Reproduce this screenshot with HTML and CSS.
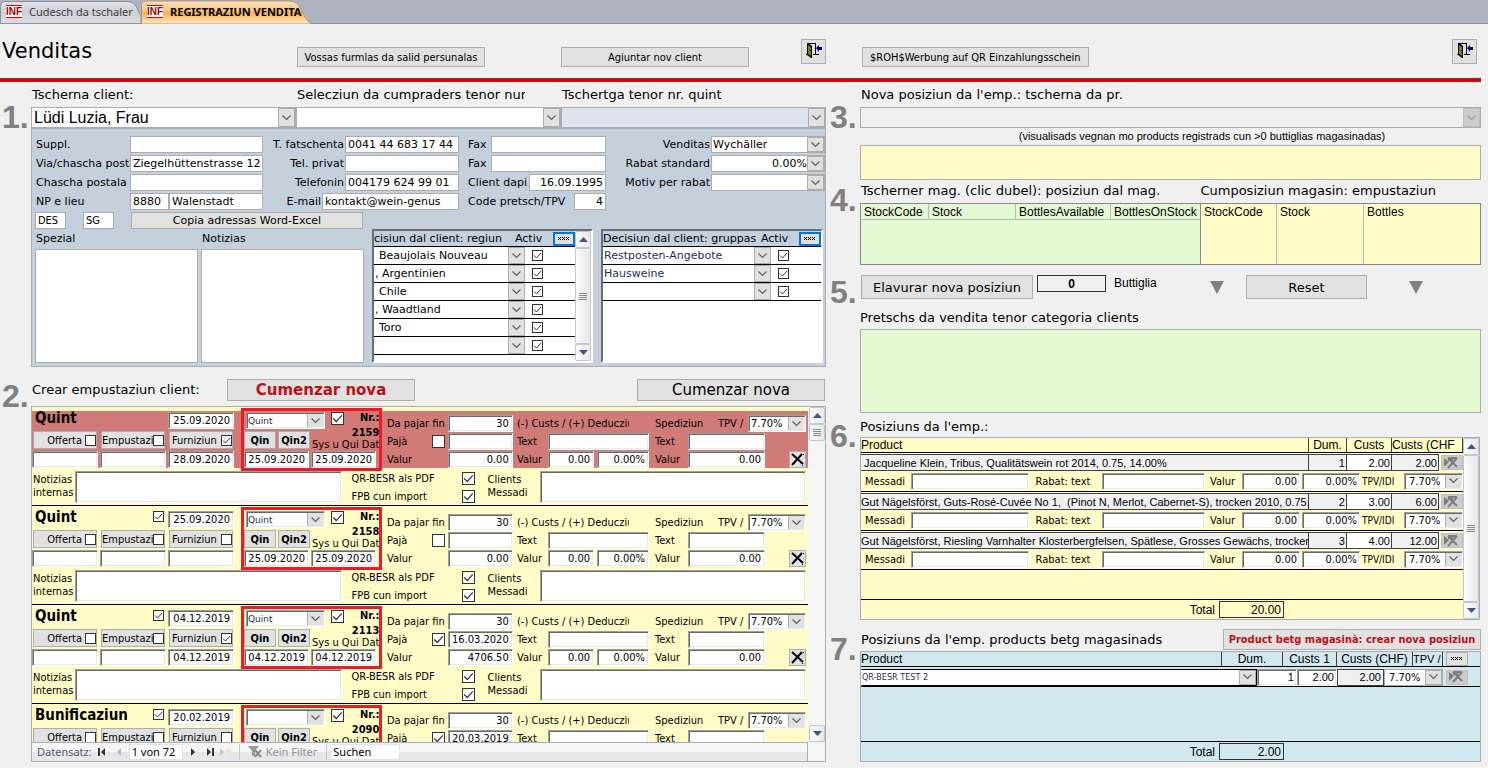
FILE: index.html
```html
<!DOCTYPE html>
<html lang="rm">
<head>
    <meta charset="UTF-8">
    <meta name="viewport" content="width=device-width, initial-scale=1.0">
    <title>Registraziun vendita</title>
    <link rel="stylesheet" href="styles.css">
</head>
<body>
    <svg class="symbols" aria-hidden="true">
        <symbol id="icon-exit" viewBox="0 0 16 16">
            <path d="M1 0h9v11h3v1H7v-1h2V1H2z" fill="#000"/>
            <path d="M0 11h2v1H0z" fill="#000"/>
            <path d="M1 0h1l4 3v12h-1l-4-3z" fill="#000"/>
            <path d="M2 2l3 2v9l-3-2z" fill="#808000"/>
            <path d="M4 7h1v1H4z" fill="#000"/>
            <path d="M10 5l3-3v2h3v3h-3v2z" fill="#000080"/>
        </symbol>
        <symbol id="icon-delete" viewBox="0 0 15 15">
            <path d="M2 2l11 10M12 2L2 13" fill="none" stroke="#000" stroke-width="2"/>
            <path d="M12 13h1v1h-1zM13 2h1v1h-1z" fill="#000"/>
        </symbol>
        <symbol id="icon-delete-off" viewBox="0 0 18 12">
            <path d="M1 1l5 4-5 5z" fill="#7d7d7d"/>
            <path d="M5 1l9 9M14 1L5 11M5 1h9M5 3h5" fill="none" stroke="#7d7d7d" stroke-width="2"/>
        </symbol>
        <symbol id="icon-up" viewBox="0 0 9 5"><path d="M0 5l4.500-5L9 5z" fill="#44547c"/></symbol>
        <symbol id="icon-down" viewBox="0 0 9 5"><path d="M0 0l4.500 5L9 0z" fill="#44547c"/></symbol>
        <symbol id="icon-dots" viewBox="0 0 12 4">
            <path d="M0 0h1v1H0zM2 0h1v1H2zM1 1h1v1H1zM0 2h1v1H0zM2 2h1v1H2zM4 0h1v1H4zM6 0h1v1H6zM5 1h1v1H5zM4 2h1v1H4zM6 2h1v1H6zM8 0h1v1H8zM10 0h1v1h-1zM9 1h1v1H9zM8 2h1v1H8zM10 2h1v1h-1z" fill="#000"/>
        </symbol>
    </svg>

    <nav class="tab-bar">
        <a class="tab" href="#">
            <svg class="tab-shape" viewBox="0 0 141 23" aria-hidden="true">
                <defs><linearGradient id="tabGrey" x2="0" y2="1"><stop offset="0" stop-color="#dfe1e6"/><stop offset=".5" stop-color="#cdd0d7"/><stop offset="1" stop-color="#dcdee4"/></linearGradient></defs>
                <path d="M.5 23V6Q.5 1 5 1H128Q136 2 138 10L141 16V23z" fill="url(#tabGrey)" stroke="#8b919d"/>
            </svg>
            <span class="tab-logo">INF</span>
            <span>Cudesch da tschaler</span>
        </a>
        <a class="tab tab-active" href="#">
            <svg class="tab-shape" viewBox="0 0 172 24" aria-hidden="true">
                <defs><linearGradient id="tabOrange" x2="0" y2="1"><stop offset="0" stop-color="#fde3bd"/><stop offset=".4" stop-color="#fcc681"/><stop offset=".5" stop-color="#fbb04c"/><stop offset="1" stop-color="#fde9cb"/></linearGradient></defs>
                <path d="M.5 24V5Q.5 1 4.500 1H148Q157 1 160 9Q166 23 171 24z" fill="url(#tabOrange)" stroke="#a8977f"/>
            </svg>
            <span class="tab-logo">INF</span>
            <span>REGISTRAZIUN VENDITA</span>
        </a>
    </nav>

    <header class="header columns">
        <div class="header-left">
            <h1>Venditas</h1>
            <button class="header-button">Vossas furmlas da salid persunalas</button>
            <button class="header-button header-add">Agiuntar nov client</button>
            <button class="exit-button" aria-label="Serrar"><svg><use href="#icon-exit"/></svg></button>
        </div>
        <div class="header-right">
            <button class="header-button">$ROH$Werbung auf QR Einzahlungsschein</button>
            <button class="exit-button" aria-label="Serrar"><svg><use href="#icon-exit"/></svg></button>
        </div>
    </header>

    <main class="columns">
        <div class="column-left">
            <section class="step">
                <div class="step-number step-number-low">1.</div>
                <div class="step-body">
                    <div class="search-row">
                        <div class="search-field">
                            <label for="client">Tscherna client:</label>
                            <select id="client"><option>Lüdi Luzia, Frau</option></select>
                        </div>
                        <div class="search-field">
                            <label for="buyers" class="label-cut">Selecziun da cumpraders tenor numer</label>
                            <select id="buyers"><option></option></select>
                        </div>
                        <div class="search-field">
                            <label for="receipt">Tschertga tenor nr. quint</label>
                            <select id="receipt" class="search-focus"><option></option></select>
                        </div>
                    </div>

                    <div class="client-panel">
                        <div class="client-fields">
                            <div class="field-group">
                                <div class="line"><label for="suppl">Suppl.</label><input id="suppl" class="w133"></div>
                                <div class="line"><label for="street">Via/chascha postala</label><input id="street" class="w133" value="Ziegelhüttenstrasse 12"></div>
                                <div class="line"><label for="pobox">Chascha postala</label><input id="pobox" class="w133"></div>
                                <div class="line"><label for="zip">NP e lieu</label><input id="zip" class="w39" value="8880"><input class="w94" aria-label="Lieu" value="Walenstadt"></div>
                            </div>
                            <div class="field-group group-phone">
                                <div class="line"><label for="telWork">T. fatschenta</label><input id="telWork" class="w114" value="0041 44 683 17 44"></div>
                                <div class="line"><label for="telHome">Tel. privat</label><input id="telHome" class="w114"></div>
                                <div class="line"><label for="mobile">Telefonin</label><input id="mobile" class="w114" value="004179 624 99 01"></div>
                                <div class="line"><label for="email">E-mail</label><input id="email" class="w137" value="kontakt@wein-genus"></div>
                            </div>
                            <div class="field-group group-fax">
                                <div class="line"><label for="fax1">Fax</label><input id="fax1" class="w115"></div>
                                <div class="line"><label for="fax2">Fax</label><input id="fax2" class="w115"></div>
                                <div class="line"><label for="since">Client dapi</label><input id="since" class="w77 right" value="16.09.1995"></div>
                                <div class="line"><label for="priceCode">Code pretsch/TPV</label><input id="priceCode" class="w32 right" value="4"></div>
                            </div>
                            <div class="field-group group-sales">
                                <div class="line"><label for="sales">Venditas</label><select id="sales" class="w114"><option>Wychäller</option></select></div>
                                <div class="line"><label for="discount">Rabat standard</label><select id="discount" class="w114 right"><option>0.00%</option></select></div>
                                <div class="line"><label for="reason">Motiv per rabat</label><select id="reason" class="w114"><option></option></select></div>
                            </div>
                        </div>
                        <div class="client-codes">
                            <input aria-label="Lingua" value="DES">
                            <input aria-label="Chantun" value="SG">
                            <button>Copia adressas Word-Excel</button>
                        </div>
                        <div class="client-lower">
                            <div class="memo"><label for="special">Spezial</label><textarea id="special"></textarea></div>
                            <div class="memo"><label for="notes">Notizias</label><textarea id="notes"></textarea></div>
                            <div class="subform">
                                <table class="decision">
                                    <colgroup><col><col class="w10"><col class="w28"><col class="w22"></colgroup>
                                    <thead><tr><th>cisiun dal client: regiun</th><th colspan="2">Activ</th><th><button class="dots-button dots-focus" aria-label="Tut"><svg><use href="#icon-dots"/></svg></button></th></tr></thead>
                                    <tbody id="regions"></tbody>
                                </table>
                                <div class="scrollbar">
                                    <button aria-label="Ensi"><svg><use href="#icon-up"/></svg></button>
                                    <div class="thumb"></div>
                                    <button aria-label="Engiu"><svg><use href="#icon-down"/></svg></button>
                                </div>
                            </div>
                            <div class="subform subform-groups">
                                <table class="decision">
                                    <colgroup><col><col class="w10"><col class="w28"><col class="w22"></colgroup>
                                    <thead><tr><th>Decisiun dal client: gruppas</th><th colspan="2">Activ</th><th><button class="dots-button dots-focus" aria-label="Tut"><svg><use href="#icon-dots"/></svg></button></th></tr></thead>
                                    <tbody id="groups"></tbody>
                                </table>
                            </div>
                        </div>
                    </div>
                </div>
            </section>

            <section class="step step-orders">
                <div class="step-number">2.</div>
                <div class="step-body">
                    <div class="create-row">
                        <span class="caption">Crear empustaziun client:</span>
                        <button class="create-button create-red">Cumenzar nova</button>
                        <button class="create-button">Cumenzar nova</button>
                    </div>
                    <div class="orders">
                        <div class="orders-main">
                            <div class="order-list" id="orders"></div>
                            <div class="record-nav">
                                <span>Datensatz:</span>
                                <button aria-label="Emprim"><svg viewBox="0 0 8 8"><path d="M0 0h2v8H0zM7 0v8L3 4z" fill="#333"/></svg></button>
                                <button aria-label="Anavos"><svg viewBox="0 0 8 8"><path d="M6 0v8L2 4z" fill="#b4b7bd"/></svg></button>
                                <input class="nav-position" aria-label="Datensatz" value="1 von 72">
                                <button aria-label="Enavant"><svg viewBox="0 0 8 8"><path d="M2 0v8l4-4z" fill="#333"/></svg></button>
                                <button aria-label="Ultim"><svg viewBox="0 0 8 8"><path d="M1 0v8l4-4zM6 0h2v8H6z" fill="#333"/></svg></button>
                                <button aria-label="Nov" class="nav-new"><svg viewBox="0 0 14 8"><path d="M0 0v8l4-4z" fill="#c4c6cb"/><path d="M9 0v8M5 4h8M6 1l6 6M12 1l-6 6" stroke="#eadfba"/></svg></button>
                                <span class="nav-filter"><svg viewBox="0 0 14 12"><path d="M0 0h11L7 5v6L4 9V5z" fill="#999"/><path d="M7 4l6 7M13 4l-6 7" stroke="#888" stroke-width="2"/></svg>Kein Filter</span>
                                <input class="nav-search" aria-label="Suchen" value="Suchen">
                            </div>
                        </div>
                        <div class="scrollbar scrollbar-orders">
                            <button aria-label="Ensi"><svg><use href="#icon-up"/></svg></button>
                            <div class="thumb thumb-short"></div>
                            <button class="scroll-end" aria-label="Engiu"><svg><use href="#icon-down"/></svg></button>
                        </div>
                    </div>
                </div>
            </section>
        </div>

        <div class="column-right">
            <section class="step">
                <div class="step-number step-number-low">3.</div>
                <div class="step-body">
                    <div class="search-field">
                        <label for="product">Nova posiziun da l'emp.: tscherna da pr.</label>
                        <select id="product" disabled><option></option></select>
                    </div>
                    <p class="hint">(visualisads vegnan mo products registrads cun &gt;0 buttiglias magasinadas)</p>
                    <div class="product-info"></div>
                </div>
            </section>

            <section class="step">
                <div class="step-number">4.</div>
                <div class="step-body">
                    <div class="stock-captions">
                        <span class="caption">Tscherner mag. (clic dubel): posiziun dal mag.</span>
                        <span class="caption">Cumposiziun magasin: empustaziun</span>
                    </div>
                    <div class="stock-lists">
                        <table class="stock stock-green">
                            <colgroup><col class="w68"><col><col class="w95"><col class="w89"></colgroup>
                            <thead><tr><th>StockCode</th><th>Stock</th><th>BottlesAvailable</th><th>BottlesOnStock</th></tr></thead>
                            <tbody><tr><td colspan="4"></td></tr></tbody>
                        </table>
                        <table class="stock stock-yellow">
                            <colgroup><col class="w76"><col class="w87"><col></colgroup>
                            <thead><tr><th>StockCode</th><th>Stock</th><th>Bottles</th></tr></thead>
                            <tbody><tr><td></td><td></td><td></td></tr></tbody>
                        </table>
                    </div>
                </div>
            </section>

            <section class="step step-edit">
                <div class="step-number">5.</div>
                <div class="step-body">
                    <div class="edit-row">
                        <button class="edit-button">Elavurar nova posiziun</button>
                        <input id="bottles" class="bottles" value="0">
                        <label for="bottles">Buttiglia</label>
                        <span class="triangle"></span>
                        <button class="reset-button">Reset</button>
                        <span class="triangle"></span>
                    </div>
                    <div class="caption">Pretschs da vendita tenor categoria clients</div>
                    <div class="prices"></div>
                </div>
            </section>

            <section class="step step-positions">
                <div class="step-number">6.</div>
                <div class="step-body">
                    <div class="caption">Posiziuns da l'emp.:</div>
                    <div class="positions">
                        <div class="positions-main">
                            <table class="position-table">
                                <colgroup><col><col class="w38"><col class="w45"><col class="w47"><col class="w24"></colgroup>
                                <thead><tr><th>Product</th><th class="center">Dum.</th><th class="center">Custs</th><th colspan="2">Custs (CHF</th></tr></thead>
                                <tbody id="positions"></tbody>
                            </table>
                            <div class="total-row"><label for="total">Total</label><input id="total" class="total" value="20.00"></div>
                        </div>
                        <div class="scrollbar">
                            <button aria-label="Ensi"><svg><use href="#icon-up"/></svg></button>
                            <div class="thumb"></div>
                            <button aria-label="Engiu"><svg><use href="#icon-down"/></svg></button>
                        </div>
                    </div>
                </div>
            </section>

            <section class="step step-other">
                <div class="step-number">7.</div>
                <div class="step-body">
                    <div class="other-row">
                        <span class="caption">Posiziuns da l'emp. products betg magasinads</span>
                        <button class="other-button">Product betg magasinà: crear nova posiziun</button>
                    </div>
                    <div class="other-positions">
                        <table class="other-table">
                            <colgroup><col><col class="w35"><col class="w26"><col class="w14"><col class="w40"><col class="w47"><col class="w29"><col class="w30"><col class="w37"></colgroup>
                            <thead><tr><th>Product</th><th colspan="2" class="center">Dum.</th><th colspan="2" class="center">Custs 1</th><th colspan="2" class="center">Custs (CHF)</th><th class="narrow">TPV /</th><th><button class="dots-button" aria-label="Tut"><svg><use href="#icon-dots"/></svg></button></th></tr></thead>
                            <tbody><tr>
                                <td colspan="2"><select aria-label="Product" class="other-product"><option>QR-BESR TEST 2</option></select></td>
                                <td colspan="2"><input aria-label="Dumber" value="1"></td>
                                <td><input aria-label="Custs" value="2.00"></td>
                                <td><input aria-label="Custs (CHF)" class="other-sum" value="2.00"></td>
                                <td colspan="2"><select aria-label="TPV"><option>7.70%</option></select></td>
                                <td><button class="delete-off" aria-label="Stizzar" disabled><svg><use href="#icon-delete-off"/></svg></button></td>
                            </tr></tbody>
                        </table>
                        <div class="total-row"><label for="otherTotal">Total</label><input id="otherTotal" class="total" value="2.00"></div>
                    </div>
                </div>
            </section>
        </div>
    </main>

    <script src="script.js"></script>
</body>
</html>
```
FILE: styles.css
```css
* {
    box-sizing: border-box;
}
body {
    margin: 0;
    background-color: #f0f0f0;
    color: #000;
    font-family: "DejaVu Sans", Verdana, sans-serif;
    font-size: 11px;
}
h1, h2, p {
    margin: 0;
    font-weight: normal;
}
input, select, textarea, button {
    min-width: 0;
    margin: 0;
    padding: 0;
    border-radius: 0;
    font: inherit;
    color: inherit;
}
input, select, textarea {
    display: block;
    height: 17px;
    border: 1px solid #a9acb1;
    background-color: #fff;
}
input {
    padding: 0 2px;
}
textarea {
    resize: none;
}
button {
    display: flex;
    align-items: center;
    justify-content: center;
    border: 1px solid #adadad;
    background-color: #e1e1e1;
    white-space: nowrap;
}
select {
    appearance: none;
    padding: 0 17px 0 1px;
    background-image:
        url("data:image/svg+xml,%3Csvg xmlns='http://www.w3.org/2000/svg' width='9' height='6'%3E%3Cpath d='M.5 .5l4 4 4-4' fill='none' stroke='%23606060' stroke-width='1.200'/%3E%3C/svg%3E"),
        linear-gradient(#e1e1e1, #e1e1e1),
        linear-gradient(#adadad, #adadad);
    background-position: right 4px center, right 1px center, right 0 center;
    background-size: 9px 6px, 15px calc(100% - 2px), 17px 100%;
    background-repeat: no-repeat;
}
select:disabled {
    background-color: #f0f0f0;
    opacity: 1;
    background-image:
        url("data:image/svg+xml,%3Csvg xmlns='http://www.w3.org/2000/svg' width='9' height='6'%3E%3Cpath d='M.5 .5l4 4 4-4' fill='none' stroke='%23a0a0a0' stroke-width='1.200'/%3E%3C/svg%3E"),
        linear-gradient(#cccccc, #cccccc),
        linear-gradient(#bfbfbf, #bfbfbf);
}
input[type="checkbox"] {
    appearance: none;
    flex: none;
    width: 11px;
    height: 11px;
    padding: 0;
    border: 1px solid #333;
    background-color: #fff;
}
input[type="checkbox"].big {
    width: 13px;
    height: 13px;
}
input[type="checkbox"]:checked {
    background-image: url("data:image/svg+xml,%3Csvg xmlns='http://www.w3.org/2000/svg' viewBox='0 0 9 9'%3E%3Cpath d='M1 4.500l2.500 2.500L8 2' fill='none' stroke='%23333'/%3E%3C/svg%3E");
}
label, th, .caption {
    white-space: nowrap;
}
table {
    width: 100%;
    border-spacing: 0;
    table-layout: fixed;
}
th, td {
    padding: 0;
    font-weight: normal;
    text-align: left;
}
.symbols {
    display: none;
}
.right {
    text-align: right;
    text-align-last: right;
}
th.center {
    padding: 0;
    text-align: center;
}

/* widths */
.w10 { width: 10px; }
.w14 { width: 14px; }
.w22 { width: 22px; }
.w24 { width: 24px; }
.w26 { width: 26px; }
.w28 { width: 28px; }
.w29 { width: 29px; }
.w30 { width: 30px; }
.w32 { width: 32px; }
.w35 { width: 35px; }
.w37 { width: 37px; }
.w38 { width: 38px; }
.w39 { width: 39px; }
.w40 { width: 40px; }
.w45 { width: 45px; }
.w46 { width: 46px; }
.w47 { width: 47px; }
.w52 { width: 52px; }
.w58 { width: 58px; }
.w65 { width: 65px; }
.w68 { width: 68px; }
.w76 { width: 76px; }
.w77 { width: 77px; }
.w87 { width: 87px; }
.w89 { width: 89px; }
.w94 { width: 94px; }
.w95 { width: 95px; }
.w101 { width: 101px; }
.w114 { width: 114px; }
.w115 { width: 115px; }
.w133 { width: 133px; }
.w137 { width: 137px; }

/* tabs */
.tab-bar {
    display: flex;
    height: 24px;
    border-bottom: 1px solid #8b919d;
    background-color: #adb3bf;
}
.tab {
    position: relative;
    display: flex;
    align-items: center;
    gap: 7px;
    width: 141px;
    padding-left: 6px;
    color: #3f3f3f;
    font-family: "Noto Sans", sans-serif;
    font-size: 11px;
    white-space: nowrap;
    text-decoration: none;
}
.tab-active {
    width: 172px;
    color: #000;
    font-weight: bold;
}
.tab span {
    position: relative;
}
.tab-shape {
    position: absolute;
    inset: 0;
    width: 100%;
    height: 24px;
}
.tab-logo {
    width: 16px;
    height: 13px;
    border-top: 1px solid #e00000;
    border-bottom: 1px solid #e00000;
    background-color: #fff;
    color: #9c0000;
    font: bold 10px/11px "Liberation Sans", Arial, sans-serif;
    text-align: center;
}

/* header */
.columns {
    display: grid;
    grid-template-columns: minmax(0, 826fr) minmax(0, 651fr);
    column-gap: 4px;
    margin-right: 7px;
}
.header {
    height: 58px;
    border-bottom: 4px solid #bc1114;
}
.header-left {
    display: grid;
    grid-template-columns: 297px 188px 76fr 188px 52fr 25px;
    align-items: center;
}
.header-left h1 {
    padding-left: 2px;
    font-size: 21px;
}
.header-add {
    grid-column: 4;
}
.header-left .exit-button {
    grid-column: 6;
}
.header-right {
    display: flex;
    align-items: center;
    justify-content: space-between;
    padding: 0 4px 0 32px;
}
.header-button {
    height: 20px;
    margin-top: 12px;
    padding: 0 7px;
    font-family: "DejaVu Sans Condensed", "DejaVu Sans", Tahoma, sans-serif;
    font-size: 11px;
}
.exit-button {
    width: 25px;
    height: 25px;
}
.exit-button svg {
    width: 16px;
    height: 16px;
    flex: none;
}

/* numbered steps */
.step {
    display: grid;
    grid-template-columns: 31px minmax(0, 1fr);
}
.column-right .step {
    grid-template-columns: 30px minmax(0, 1fr);
    margin-bottom: 3px;
}
.step-number {
    padding-left: 2px;
    color: #808080;
    font: bold 32px/34px "Liberation Sans", Arial, sans-serif;
}
.column-right .step-number {
    padding-left: 0;
}
.step-number-low {
    padding-top: 18px;
}
.caption {
    font-size: 13px;
    line-height: 16px;
}
.search-row {
    display: grid;
    grid-template-columns: repeat(3, minmax(0, 1fr));
}
.search-field label {
    display: block;
    padding-left: 1px;
    font-size: 13px;
    line-height: 26px;
    height: 25px;
}
.search-row .label-cut {
    overflow: hidden;
    width: 229px;
}
.search-field select {
    width: 100%;
    height: 21px;
    padding-left: 2px;
    font-family: "Liberation Sans", Arial, sans-serif;
    font-size: 16px;
}
.search-field .search-focus {
    background-color: #dde4ed;
}

/* client */
.client-panel {
    padding: 7px 0 3px;
    border: 1px solid #a9acb1;
    background-color: #c4d0dc;
}
.client-fields {
    display: flex;
    padding-left: 4px;
}
.field-group {
    display: grid;
    flex: none;
    grid-template-columns: minmax(0, 1fr);
    grid-auto-rows: 17px;
    gap: 2px;
    width: 227px;
}
.line {
    display: flex;
    align-items: center;
}
.line label {
    flex: 1;
    overflow: hidden;
    min-width: 0;
    line-height: 15px;
}
.line input, .line select {
    flex: none;
}
.group-phone {
    width: 196px;
}
.group-phone label, .group-sales label {
    padding-right: 1px;
    text-align: right;
}
.group-fax {
    width: 147px;
    padding-left: 9px;
}
.field-group.group-sales {
    flex: 1;
}
.client-codes {
    display: flex;
    gap: 17px;
    margin-top: 2px;
    padding-left: 3px;
}
.client-codes input {
    width: 31px;
    font-family: "DejaVu Sans Condensed", "DejaVu Sans", sans-serif;
}
.client-codes button {
    width: 232px;
    height: 17px;
}
.client-lower {
    display: grid;
    grid-template-columns: 163fr 163fr 226fr 227fr;
    gap: 3px;
    height: 134px;
    padding: 0 2px 0 3px;
}
.memo {
    display: flex;
    flex-direction: column;
    min-width: 0;
}
.memo label {
    padding-left: 1px;
    line-height: 20px;
}
.memo textarea {
    flex: 1;
    width: 100%;
}
.subform {
    display: flex;
    align-items: flex-start;
    overflow: hidden;
    margin-left: 5px;
    border: 2px solid;
    border-color: #6d6d6d #fff #fff #6d6d6d;
    background-color: #fff;
}
.subform .scrollbar {
    height: 130px;
}
.decision th {
    overflow: hidden;
    height: 16px;
    border-bottom: 1px solid #000;
    background-color: #c4d0dc;
    line-height: 13px;
}
.decision td {
    height: 18px;
    border-bottom: 1px solid #000;
}
.decision select {
    width: 100%;
    border: 0;
}
.decision .indented {
    padding-left: 5px;
}
.decision td input {
    margin-left: 7px;
}
.subform-groups select {
    color: #1f2f55;
}
.dots-button {
    width: 22px;
    height: 14px;
}
.dots-focus {
    border: 2px solid #0078d7;
}
.dots-button svg {
    width: 12px;
    height: 4px;
    flex: none;
}

/* scrollbars */
.scrollbar {
    flex: none;
    display: flex;
    flex-direction: column;
    width: 16px;
    background-color: #f5f5f6;
}
.scrollbar button {
    flex: none;
    height: 17px;
    border: 1px solid #c3c6cc;
    border-radius: 2px;
    background-image: linear-gradient(90deg, #fafafb, #e9eaed);
}
.scrollbar svg {
    width: 9px;
    height: 5px;
}
.thumb {
    flex: 1;
    border: 1px solid #c3c6cc;
    border-radius: 2px;
    background:
        repeating-linear-gradient(#888 0 1px, transparent 1px 2px) center / 8px 7px no-repeat,
        linear-gradient(90deg, #fafafb, #e6e7ea);
}
.thumb-short {
    flex: none;
    height: 17px;
}
.scroll-end {
    margin-top: auto;
}

/* orders */
.step-orders {
    padding-top: 12px;
}
.create-row {
    display: grid;
    grid-template-columns: 196px 188px 1fr 188px;
    align-items: center;
    margin-bottom: 5px;
    padding-right: 1px;
}
.create-row .caption {
    padding-left: 1px;
}
.create-button {
    grid-column: 4;
    height: 22px;
    font-size: 15px;
}
.create-red {
    grid-column: 2;
    color: #bc1114;
    font-weight: bold;
}
.orders {
    display: flex;
    border: 1px solid #a9acb1;
    background-color: #fff;
}
.orders-main {
    flex: 1;
    min-width: 0;
}
.order-list {
    overflow: hidden;
    height: 335px;
}
.scrollbar-orders {
    width: 17px;
    padding: 0 0 19px 1px;
}
.order {
    padding: 4px 0 2px;
    border-bottom: 1px solid #000;
    background-color: #fffcc8;
    font-family: "DejaVu Sans Condensed", "DejaVu Sans", Tahoma, sans-serif;
}
.order input[type="text"], .order select, .order textarea,
.detail input, .detail select, .other-table input {
    border-color: #a0a0a0 #fff #fff #a0a0a0;
    box-shadow: inset 1px 1px #696969, inset -1px -1px #e9e9e9;
}
.order input[type="text"] {
    padding: 0 3px;
    text-align: right;
}
.order-top {
    display: grid;
    grid-template-columns: 212px 143px 130px 138px minmax(0, 1fr);
    height: 57px;
}
.order-current .order-top {
    background-color: #d07b78;
}
.stages {
    display: grid;
    grid-template-columns: repeat(3, 66px);
    grid-template-rows: 17px 18px 17px;
    gap: 2px;
    padding-top: 1px;
}
.order-title {
    grid-column: span 2;
    display: flex;
    align-items: flex-start;
    justify-content: space-between;
    padding: 0 2px 0 3px;
}
.order-title h2 {
    font-size: 15px;
    font-weight: bold;
    line-height: 13px;
}
.stages input[type="text"] {
    width: 66px;
}
.stage {
    display: flex;
    align-items: center;
    gap: 3px;
    margin: 0 1px;
    padding: 1px 0 0 2px;
    border: 1px solid #adadad;
    background-color: #e1e1e1;
}
.stage span {
    flex: 1;
    overflow: hidden;
    line-height: 14px;
}
.stage-right {
    text-align: right;
}
.stage-cut {
    gap: 0;
    padding-left: 0;
}
.invoice {
    display: grid;
    grid-template-rows: 17px 18px 17px;
    gap: 2px;
    width: 135px;
    padding-top: 1px;
    outline: 3px solid #ed1c24;
}
.invoice > div {
    display: flex;
    gap: 2px;
}
.invoice .invoice-type {
    align-items: flex-start;
    gap: 6px;
    padding: 0 2px;
}
.invoice-type select {
    width: 79px;
    color: #1f2f55;
    font-family: "DejaVu Sans", Verdana, sans-serif;
    font-size: 9px;
}
.invoice-type strong {
    margin-left: auto;
    line-height: 12px;
}
.invoice button {
    width: 32px;
    font-weight: bold;
}
.invoice-number {
    align-self: flex-end;
    flex: 1;
    margin-bottom: -2px;
    padding-right: 2px;
    line-height: 12px;
    text-align: right;
    white-space: nowrap;
}
.invoice-number strong {
    display: block;
}
.invoice-dates input {
    width: 65px;
}
.amounts {
    display: grid;
    grid-auto-rows: 17px;
    gap: 1px;
    padding-top: 4px;
}
.amounts > div {
    display: flex;
    align-items: center;
    gap: 3px;
}
.amounts label, .amounts span {
    flex: 1;
    overflow: hidden;
    line-height: 14px;
    white-space: nowrap;
}
.amounts select {
    padding-left: 2px;
}
.payment {
    width: 125px;
}
.costs {
    width: 132px;
}
.costs .costs-title {
    width: 112px;
}
.shipping {
    padding-right: 2px;
}
.shipping .tax-label {
    flex: none;
    width: 27px;
}
.shipping .after {
    margin-right: 41px;
}
.shipping .before-delete {
    margin-right: 21px;
}
.delete-button {
    width: 17px;
    height: 17px;
}
.delete-button svg {
    width: 15px;
    height: 15px;
    flex: none;
}
.order-bottom {
    display: flex;
    padding: 3px 2px 0 1px;
}
.order-bottom textarea {
    flex: 1;
    height: 32px;
}
.order-bottom .two-lines {
    width: 42px;
    padding-top: 2px;
    line-height: 13px;
    white-space: normal;
}
.order-bottom .clients-label {
    width: 52px;
}
.options {
    display: grid;
    gap: 4px;
    width: 123px;
    margin: 1px 13px 0 10px;
}
.options label {
    display: flex;
    justify-content: space-between;
    line-height: 13px;
}

/* record navigation */
.record-nav {
    display: flex;
    align-items: center;
    gap: 3px;
    height: 19px;
    padding: 0 0 1px 5px;
    border-top: 1px solid #a9acb1;
    border-right: 1px solid #a9acb1;
    background-image: linear-gradient(#f4f5f7 50%, #e6e7eb 50%);
    color: #555b66;
    font-family: "Noto Sans", "Open Sans", sans-serif;
    line-height: 16px;
}
.record-nav button {
    width: 14px;
    height: 16px;
    border: 0;
    background: none;
}
.record-nav button svg {
    width: 8px;
    height: 8px;
}
.record-nav input {
    height: 16px;
    border-color: #e0e2e6;
    color: #000;
}
.record-nav .nav-position {
    width: 54px;
}
.record-nav .nav-new svg {
    width: 14px;
    flex: none;
}
.nav-filter {
    display: flex;
    align-items: center;
    gap: 4px;
    margin-left: 2px;
    padding: 0 9px 0 8px;
    border: solid #c3c6cc;
    border-width: 0 1px;
    color: #909398;
}
.nav-filter svg {
    width: 14px;
    height: 12px;
}
.nav-search {
    width: 70px;
}

/* product search and stock */
.hint {
    padding-left: 63px;
    font: 11px/17px "Liberation Sans", Arial, sans-serif;
    text-align: center;
}
.product-info {
    height: 35px;
    border: 1px solid #a9acb1;
    background-color: #fffcc8;
}
.stock-captions, .stock-lists {
    display: grid;
    grid-template-columns: 340fr 281fr;
}
.stock-captions {
    margin-bottom: 4px;
    padding-left: 1px;
}
.stock {
    height: 62px;
    border: 1px solid #858992;
    font-family: "Liberation Sans", Arial, sans-serif;
    font-size: 12px;
}
.stock th {
    overflow: hidden;
    height: 16px;
    padding-left: 3px;
    border-right: 1px solid #b8b8b8;
}
.stock th:last-child, .stock td:last-child {
    border-right: 0;
}
.stock-green {
    border-right: 0;
    background-color: #e4fad2;
}
.stock-green th {
    border-bottom: 1px solid #b8b8b8;
}
.stock-yellow {
    background-color: #fffcc8;
}
.stock-yellow td {
    border-right: 1px solid #b8b8b8;
}

/* new position */
.step-edit {
    padding-top: 7px;
}
.edit-row {
    display: flex;
    align-items: flex-start;
    margin: 0 0 11px 1px;
}
.edit-row button {
    height: 24px;
    font-size: 13px;
}
.edit-button {
    width: 172px;
}
.bottles {
    width: 69px;
    margin: 0 8px 0 4px;
    border-color: #333;
    background-color: #f0f0f0;
    font: bold 12px "Liberation Sans", Arial, sans-serif;
    text-align: center;
}
.edit-row label {
    width: 96px;
    font: 12px/16px "Liberation Sans", Arial, sans-serif;
}
.triangle {
    margin-top: 6px;
    border: 7px solid transparent;
    border-top: 13px solid #808080;
    border-bottom: 0;
}
.reset-button {
    width: 121px;
    margin: 0 42px 0 22px;
}
.prices {
    height: 84px;
    margin-top: 3px;
    border: 1px solid #a9acb1;
    background-color: #e4fad2;
}

/* positions */
.step-positions {
    padding-top: 3px;
}
.positions {
    display: flex;
    height: 183px;
    margin-top: 2px;
    margin-right: 1px;
    border: 1px solid #a9acb1;
    background-color: #fffcc8;
}
.positions-main {
    flex: 1;
    display: flex;
    flex-direction: column;
    justify-content: space-between;
    min-width: 0;
}
.position-table, .other-table {
    font-family: "Liberation Sans", Arial, sans-serif;
    font-size: 12px;
}
.position-table th, .other-table th {
    overflow: hidden;
    height: 15px;
    border-right: 1px solid #404040;
    border-bottom: 1px solid #000;
    line-height: 14px;
}
.position-table .product td {
    overflow: hidden;
    height: 18px;
    padding: 0 2px 0 0;
    border-top: 1px solid #fffcc8;
    background-color: #f0f0f0;
    box-shadow: inset 0 1px #404040, inset -1px -1px #404040;
    font-size: 11px;
    text-align: right;
    white-space: nowrap;
}
.position-table .product td:first-child {
    text-align: left;
    white-space: pre;
}
.position-table .product .price {
    background-color: #fff;
}
.position-table .product .delete-cell {
    padding-left: 2px;
    background-color: #fffcc8;
    box-shadow: none;
}
.delete-off {
    width: 22px;
    height: 15px;
    border-color: #bfbfbf;
    background-color: #ccc;
}
.delete-off svg {
    width: 18px;
    height: 12px;
    flex: none;
}
.detail td {
    height: 21px;
    border-bottom: 1px solid #000;
}
.detail div {
    display: flex;
    align-items: center;
    padding-left: 4px;
    font-family: "DejaVu Sans Condensed", "DejaVu Sans", Tahoma, sans-serif;
    font-size: 11px;
}
.detail input {
    width: 58px;
    margin-right: 2px;
    text-align: right;
}
.detail input.message {
    flex: 118;
    margin-right: 7px;
}
.detail input.discount-text {
    flex: 103;
    margin-right: 5px;
}
.detail label {
    width: 46px;
}
.detail .label-discount {
    width: 66px;
}
.detail .label-value {
    width: 32px;
}
.detail .label-tax {
    width: 42px;
    font-size: 10px;
}
.detail select {
    width: 59px;
    padding-left: 4px;
}
.total-row {
    display: flex;
    align-items: center;
    justify-content: flex-end;
    gap: 4px;
    height: 20px;
    padding-right: 179px;
    border-top: 1px solid #000;
    font: 12px "Liberation Sans", Arial, sans-serif;
}
.total-row .total {
    width: 65px;
    border-color: #333;
    background-color: transparent;
    text-align: right;
}

/* positions that are not in stock */
.step-other {
    padding-top: 6px;
}
.step-other .step-number {
    padding-top: 3px;
}
.other-row {
    display: flex;
    align-items: center;
    justify-content: space-between;
    padding-left: 1px;
}
.other-button {
    width: 258px;
    height: 21px;
    margin-bottom: 1px;
    color: #bc1114;
    font-family: "DejaVu Sans Condensed", "DejaVu Sans", Tahoma, sans-serif;
    font-weight: bold;
}
.other-positions {
    display: flex;
    flex-direction: column;
    justify-content: space-between;
    height: 111px;
    border: 1px solid #a9acb1;
    background-color: #d1e9ee;
}
.other-positions .total-row {
    padding-right: 196px;
}
.other-table th:last-child {
    padding-left: 3px;
    border-right: 0;
}
.other-table .narrow {
    font-size: 11px;
}
.other-table td {
    height: 20px;
    padding-top: 1px;
    border: solid #000;
    border-width: 0 0 1px;
}
.other-table td input, .other-table td select {
    width: 100%;
    font-size: 11px;
}
.other-table td input {
    text-align: right;
}
.other-table td select {
    padding-left: 4px;
    font-family: "DejaVu Sans Condensed", "DejaVu Sans", sans-serif;
}
.other-table td .other-product {
    padding-left: 0;
    border-color: #000 #000 #000 #fff;
    color: #1f2f55;
    font-size: 9px;
}
.other-table td .other-sum {
    border-color: #404040;
    background-color: #f0f0f0;
    box-shadow: none;
}
.other-table .delete-off {
    margin-left: 3px;
}
```
FILE: script.js
```javascript
const regions = ["Beaujolais Nouveau", ", Argentinien", "Chile", ", Waadtland", "Toro", ""];
const groups = ["Restposten-Angebote", "Hausweine", ""];

const orders = [
    { title: "Quint", nr: 2159, date: "25.09.2020", type: "Quint", delivered: true, deliveryDate: "28.09.2020", sys: "25.09.2020", paid: false, paidDate: "", value: "0.00", current: true },
    { title: "Quint", nr: 2158, date: "25.09.2020", type: "Quint", delivered: false, deliveryDate: "", sys: "25.09.2020", paid: false, paidDate: "", value: "0.00" },
    { title: "Quint", nr: 2113, date: "04.12.2019", type: "Quint", delivered: true, deliveryDate: "04.12.2019", sys: "04.12.2019", paid: true, paidDate: "16.03.2020", value: "4706.50" },
    { title: "Bunificaziun", nr: 2090, date: "20.02.2019", type: "", delivered: false, deliveryDate: "", sys: "", paid: true, paidDate: "20.03.2019", value: "0.00" }
];

const positions = [
    { name: " Jacqueline Klein, Tribus, Qualitätswein rot 2014, 0.75, 14.00%", count: 1, price: "2.00", sum: "2.00" },
    { name: "Gut Nägelsförst, Guts-Rosé-Cuvée No 1,  (Pinot N, Merlot, Cabernet-S), trocken 2010, 0.75, 13.00%", count: 2, price: "3.00", sum: "6.00" },
    { name: "Gut Nägelsförst, Riesling Varnhalter Klosterbergfelsen, Spätlese, Grosses Gewächs, trocken 2011", count: 3, price: "4.00", sum: "12.00" }
];

function decisionRow(text, indented) {
    return `<tr>
        <td colspan="2"><select aria-label="Decisiun" class="${indented ? "indented" : ""}"><option>${text}</option></select></td>
        <td><input type="checkbox" aria-label="Activ" checked></td>
        <td></td>
    </tr>`;
}

function check(isChecked) {
    return isChecked ? "checked" : "";
}

function orderCard(o) {
    const n = o.nr;
    return `<article class="order ${o.current ? "order-current" : ""}">
        <div class="order-top">
            <div class="stages">
                <div class="order-title"><h2>${o.title}</h2>${o.current ? "" : `<input type="checkbox" aria-label="Serrà" checked>`}</div>
                <input type="text" aria-label="Data" value="${o.date}">
                <label class="stage stage-right"><span>Offerta</span><input type="checkbox"></label>
                <label class="stage stage-cut"><span>Empustaziun</span><input type="checkbox"></label>
                <label class="stage"><span>Furniziun</span><input type="checkbox" ${check(o.delivered)}></label>
                <input type="text" aria-label="Data offerta">
                <input type="text" aria-label="Data empustaziun">
                <input type="text" aria-label="Data furniziun" value="${o.deliveryDate}">
            </div>
            <div class="invoice">
                <div class="invoice-type"><select aria-label="Tip"><option>${o.type}</option></select><input type="checkbox" class="big" aria-label="Quint" checked><strong>Nr.:</strong></div>
                <div><button>Qin</button><button>Qin2</button><span class="invoice-number"><strong>${n}</strong>Sys u Qui Dat</span></div>
                <div class="invoice-dates"><input type="text" aria-label="Data sistem" value="${o.sys}"><input type="text" aria-label="Data quint" value="${o.sys}"></div>
            </div>
            <div class="amounts payment">
                <div><label for="due${n}">Da pajar fin</label><input type="text" class="w65" id="due${n}" value="30"></div>
                <div><label for="paid${n}">Pajà</label><input type="checkbox" class="big" id="paid${n}" ${check(o.paid)}><input type="text" class="w65" aria-label="Pajà ils" value="${o.paidDate}"></div>
                <div><label for="value${n}">Valur</label><input type="text" class="w65" id="value${n}" value="${o.value}"></div>
            </div>
            <div class="amounts costs">
                <div class="costs-title"><span>(-) Custs / (+) Deducziun</span></div>
                <div><label for="costText${n}">Text</label><input type="text" class="w101" id="costText${n}"></div>
                <div><label for="cost${n}">Valur</label><input type="text" class="w46" id="cost${n}" value="0.00"><input type="text" class="w52" aria-label="Procent" value="0.00%"></div>
            </div>
            <div class="amounts shipping">
                <div><span>Spediziun</span><label for="tax${n}" class="tax-label">TPV /</label><select class="w58" id="tax${n}"><option>7.70%</option></select></div>
                <div><label for="shipText${n}">Text</label><input type="text" class="w77 after" id="shipText${n}"></div>
                <div><label for="ship${n}">Valur</label><input type="text" class="w77 before-delete" id="ship${n}" value="0.00"><button class="delete-button" aria-label="Stizzar"><svg><use href="#icon-delete"/></svg></button></div>
            </div>
        </div>
        <div class="order-bottom">
            <label class="two-lines" for="intern${n}">Notizias internas</label><textarea id="intern${n}"></textarea>
            <div class="options">
                <label>QR-BESR als PDF<input type="checkbox" class="big" checked></label>
                <label>FPB cun import<input type="checkbox" class="big" checked></label>
            </div>
            <label class="two-lines clients-label" for="message${n}">Clients Messadi</label><textarea id="message${n}"></textarea>
        </div>
    </article>`;
}

function positionRows(p) {
    const n = p.count;
    return `<tr class="product">
        <td>${p.name}</td><td>${p.count}</td><td class="price">${p.price}</td><td>${p.sum}</td>
        <td class="delete-cell"><button class="delete-off" aria-label="Stizzar" disabled><svg><use href="#icon-delete-off"/></svg></button></td>
    </tr>
    <tr class="detail"><td colspan="5"><div>
        <label for="posMessage${n}">Messadi</label><input id="posMessage${n}" class="message">
        <label class="label-discount" for="posText${n}">Rabat: text</label><input id="posText${n}" class="discount-text">
        <label class="label-value" for="posValue${n}">Valur</label><input id="posValue${n}" value="0.00"><input aria-label="Procent" value="0.00%">
        <label class="label-tax" for="posTax${n}">TPV/IDI</label><select id="posTax${n}"><option>7.70%</option></select>
    </div></td></tr>`;
}

document.getElementById("regions").innerHTML = regions.map(r => decisionRow(r, !r.startsWith(","))).join("");
document.getElementById("groups").innerHTML = groups.map(g => decisionRow(g, false)).join("");
document.getElementById("orders").innerHTML = orders.map(orderCard).join("");
document.getElementById("positions").innerHTML = positions.map(positionRows).join("");
```
